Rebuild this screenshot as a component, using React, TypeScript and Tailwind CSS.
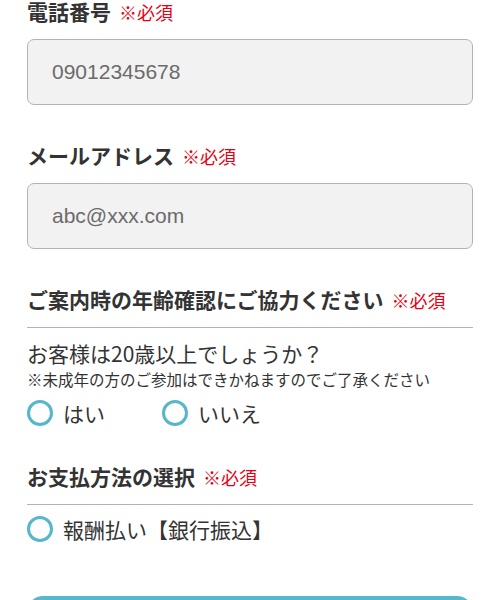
const jp = { fontFamily: '"Noto Sans CJK JP", "Noto Sans", sans-serif' };

function Required() {
  return <span className="ml-[8px] text-[18px] font-normal text-[#e60012]">※必須</span>;
}

function Label({ children }: { children: React.ReactNode }) {
  return (
    <div className="flex items-baseline text-[21px] leading-[24px] font-bold text-[#333333]">
      {children}
      <Required />
    </div>
  );
}

function Field({ placeholder }: { placeholder: string }) {
  return (
    <div
      className="mt-[15px] flex h-[66px] items-center rounded-[7px] border border-[#b3b3b3] bg-[#f2f2f2] px-[24px] text-[21px] text-[#6b6b6b]"
      style={{ fontFamily: '"Liberation Sans", Arial, sans-serif' }}
    >
      {placeholder}
    </div>
  );
}

function Radio({ label, className = '' }: { label: string; className?: string }) {
  return (
    <label className={`flex h-[26px] items-center ${className}`}>
      <span className="box-border h-[26px] w-[26px] shrink-0 rounded-full border-[3px] border-[#56b7cb] bg-white" />
      <span className="ml-[10px] text-[21px] leading-[26px] text-[#333333]">{label}</span>
    </label>
  );
}

export default function App() {
  return (
    <div className="h-[600px] overflow-hidden bg-white px-[27px]" style={jp}>
      <div className="-mt-[1px] w-[446px]">
        <Label>電話番号</Label>
        <Field placeholder="09012345678" />

        <div className="mt-[38px]">
          <Label>メールアドレス</Label>
          <Field placeholder="abc@xxx.com" />
        </div>

        <div className="mt-[38px] border-b border-[#b3b3b3] pb-[15px]">
          <Label>ご案内時の年齢確認にご協力ください</Label>
        </div>
        <p className="mt-[13px] text-[21px] leading-[24px] text-[#333333]">お客様は20歳以上でしょうか？</p>
        <p className="mt-[3px] text-[15.5px] leading-[22px] text-[#333333]">※未成年の方のご参加はできかねますのでご了承ください</p>
        <div className="mt-[10px] flex">
          <Radio label="はい" className="w-[135px]" />
          <Radio label="いいえ" />
        </div>

        <div className="mt-[38px] border-b border-[#b3b3b3] pb-[15px]">
          <Label>お支払方法の選択</Label>
        </div>
        <div className="mt-[11px]">
          <Radio label="報酬払い【銀行振込】" />
        </div>

        <button className="mt-[54px] h-[60px] w-full rounded-[16px] bg-[#56b8cc]" />
      </div>
    </div>
  );
}
